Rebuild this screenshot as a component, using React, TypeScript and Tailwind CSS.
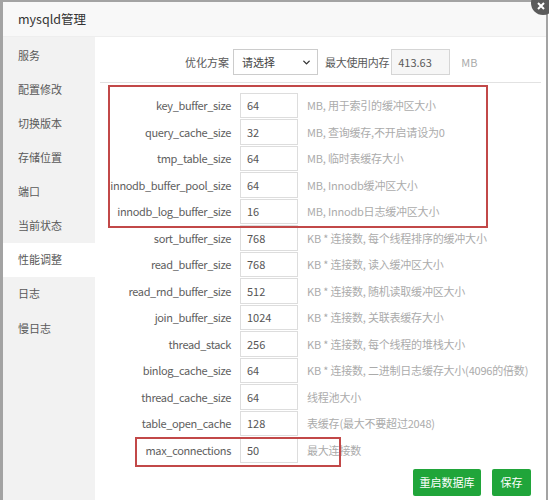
import React from "react";
import { ChevronDown } from "lucide-react";

const rows: [string, string, string][] = [
  ["key_buffer_size", "64", "MB, 用于索引的缓冲区大小"],
  ["query_cache_size", "32", "MB, 查询缓存,不开启请设为0"],
  ["tmp_table_size", "64", "MB, 临时表缓存大小"],
  ["innodb_buffer_pool_size", "64", "MB, Innodb缓冲区大小"],
  ["innodb_log_buffer_size", "16", "MB, Innodb日志缓冲区大小"],
  ["sort_buffer_size", "768", "KB * 连接数, 每个线程排序的缓冲大小"],
  ["read_buffer_size", "768", "KB * 连接数, 读入缓冲区大小"],
  ["read_rnd_buffer_size", "512", "KB * 连接数, 随机读取缓冲区大小"],
  ["join_buffer_size", "1024", "KB * 连接数, 关联表缓存大小"],
  ["thread_stack", "256", "KB * 连接数, 每个线程的堆栈大小"],
  ["binlog_cache_size", "64", "KB * 连接数, 二进制日志缓存大小(4096的倍数)"],
  ["thread_cache_size", "64", "线程池大小"],
  ["table_open_cache", "128", "表缓存(最大不要超过2048)"],
  ["max_connections", "50", "最大连接数"],
];

const menu = ["服务", "配置修改", "切换版本", "存储位置", "端口", "当前状态", "性能调整", "日志", "慢日志"];

export default function App() {
  return (
    <div
      className="relative w-[549px] h-[500px] overflow-hidden bg-white text-[11px] text-[#555]"
      style={{ fontFamily: '"Noto Sans CJK SC", "Noto Sans", sans-serif' }}
    >
      <div className="flex flex-col h-full w-[548px] border-l-[3px] border-t-2 border-r-2 border-[#a3a3a3]">
        <div className="h-[35px] shrink-0 bg-[#f8f8f8] border-b border-[#eeeeee] flex items-center pl-[15px] text-[12.5px] text-[#333]">
          mysqld管理
        </div>
        <div className="flex flex-1 min-w-0">
          <div className="w-[92px] shrink-0 bg-[#f2f2f2] pt-px">
            {menu.map((m) => (
              <div
                key={m}
                className={`h-[34.1px] flex items-center pl-[15px] text-[11px] text-[#595959] ${m === "性能调整" ? "bg-white" : ""}`}
              >
                {m}
              </div>
            ))}
          </div>
          <div className="flex-1 min-w-0 pt-[12px]">
            <div className="flex items-center h-[26px] text-[#595959]">
              <div className="w-[134px] shrink-0 text-right">优化方案</div>
              <div className="ml-[4px] shrink-0 w-[85px] h-[26px] border border-[#cccccc] flex items-center justify-between pl-[8px] pr-[5px] text-[#444]">
                <span>请选择</span>
                <ChevronDown size={11} strokeWidth={3} color="#333" />
              </div>
              <div className="ml-[7px] shrink-0 tracking-[-0.3px]">最大使用内存</div>
              <div className="ml-[2px] shrink-0 w-[59px] h-[26px] border border-[#d5d5d5] bg-[#f6f6f6] flex items-center pl-[6px]">413.63</div>
              <div className="ml-[11px] text-[#aaa]">MB</div>
            </div>
            <div className="mt-[7px] mx-[5px] border-t border-[#e2e2e2]" />
            <div className="mt-[9px]">
              {rows.map(([k, v, d]) => (
                <div key={k} className="flex items-center h-[26.5px]">
                  <div className="w-[136px] shrink-0 text-right text-[#5e5e5e] tracking-[-0.35px]">{k}</div>
                  <div className="ml-[9px] shrink-0 w-[58px] h-[25.5px] border border-[#dddddd] flex items-center pl-[6px] text-[#555]">{v}</div>
                  <div className="ml-[9px] text-[#ababab] whitespace-nowrap tracking-[-0.2px]">{d}</div>
                </div>
              ))}
            </div>
            <div className="flex justify-end gap-[11px] mt-[6px] pr-[15px]">
              <button className="w-[68px] h-[27px] bg-[#20a53a] text-white rounded-[2px] text-[11px]">重启数据库</button>
              <button className="w-[39px] h-[27px] bg-[#20a53a] text-white rounded-[2px] text-[11px]">保存</button>
            </div>
          </div>
        </div>
      </div>
      <div className="absolute left-[108px] top-[85px] w-[380px] h-[143px] border-2 border-[#c24848]" />
      <div className="absolute left-[135px] top-[437px] w-[206px] h-[30px] border-2 border-[#c24848]" />
      <div className="absolute left-[531px] top-[-9px] w-[24px] h-[24px] rounded-full bg-[#5b5b5b] flex items-center justify-center text-white">
        <svg width="10" height="10" viewBox="0 0 10 10" className="mt-[6px] mr-[4px]">
          <path d="M2 2 L8 8 M8 2 L2 8" stroke="white" strokeWidth="2" />
        </svg>
      </div>
    </div>
  );
}
